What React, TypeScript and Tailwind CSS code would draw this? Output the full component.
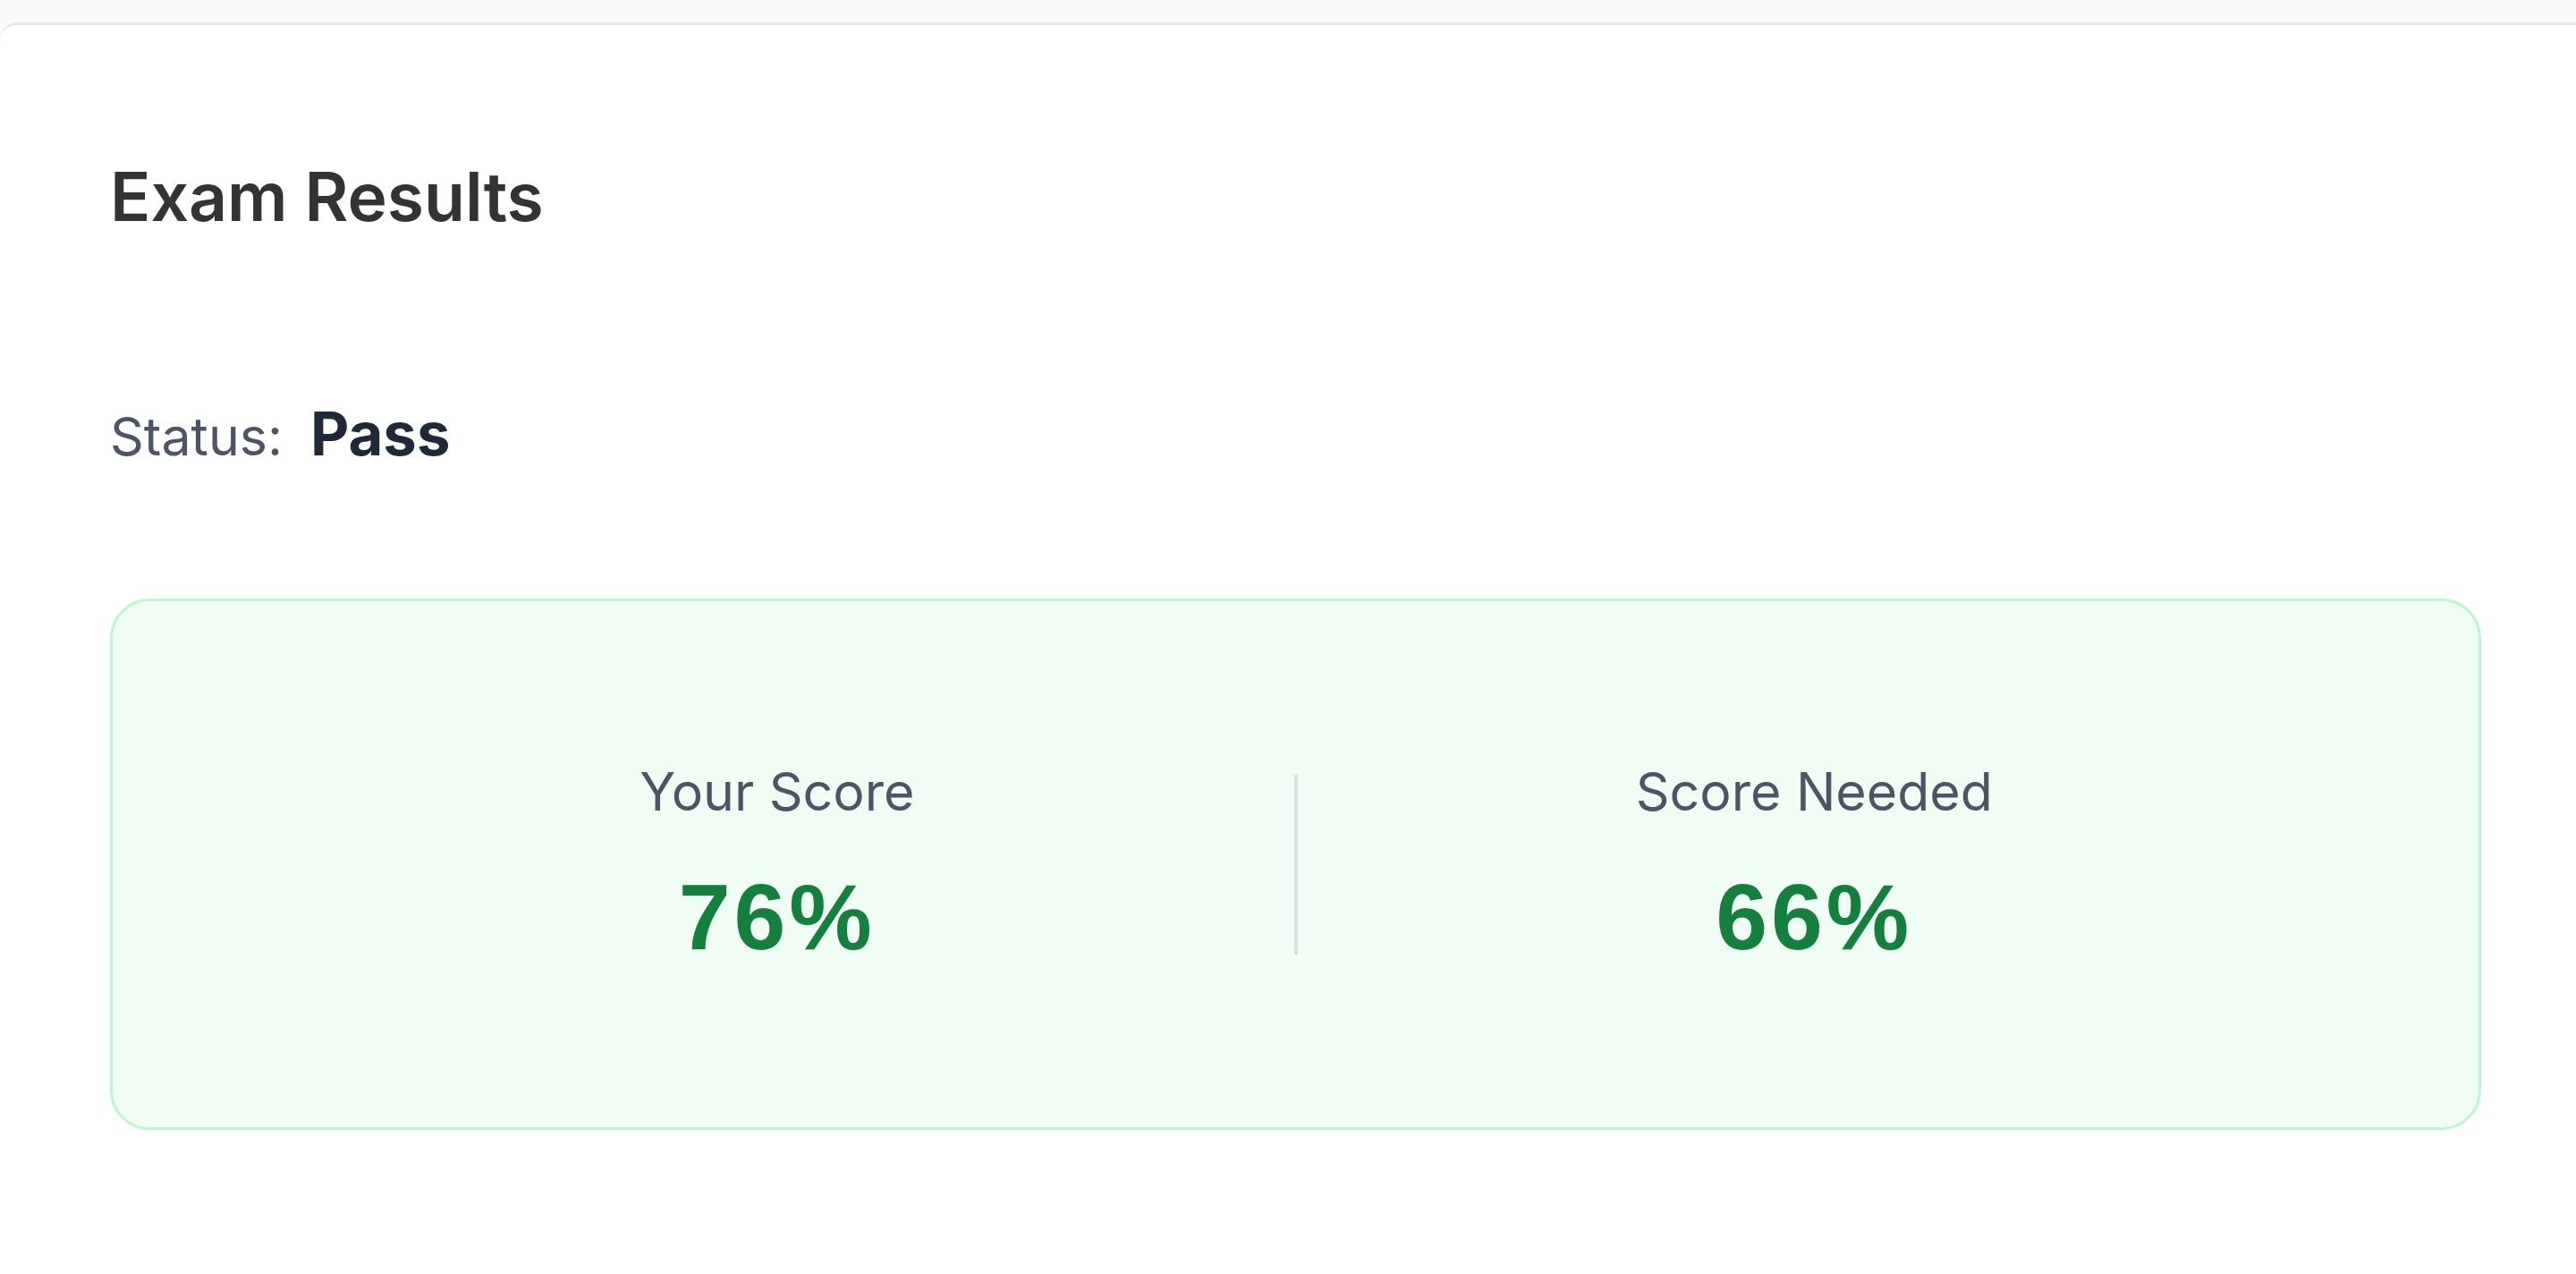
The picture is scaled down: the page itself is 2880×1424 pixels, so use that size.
const SCORES = [
  { label: 'Your Score', value: '76%' },
  { label: 'Score Needed', value: '66%' },
];

function ScoreColumn({ label, value }: { label: string; value: string }) {
  return (
    <div className="flex-1 flex flex-col items-center">
      <span className="text-[59px] leading-none text-[#4b5563] font-['Inter',sans-serif]">{label}</span>
      <span className="mt-[59px] text-[104px] leading-none font-bold tracking-[4px] text-[#15803d] font-['Liberation_Sans',Arial,sans-serif]">
        {value}
      </span>
    </div>
  );
}

export default function App() {
  return (
    <div className="min-h-screen bg-[#f9fafb] pt-[25px] overflow-hidden font-['Inter',sans-serif]">
      <div className="min-h-[1399px] bg-white border-t-[3px] border-[#e5e7eb] rounded-tl-[20px] pl-[123px] pr-[106px] pt-[154px]">
        <h1 className="text-[75px] leading-none font-semibold text-[#333333]">Exam Results</h1>

        {/* Status line */}
        <div className="mt-[194px] flex items-baseline gap-[31px]">
          <span className="text-[59px] leading-none text-[#4b5563]">Status:</span>
          <span className="text-[67px] leading-none font-bold text-[#1f2937]">Pass</span>
        </div>

        {/* Score summary */}
        <div className="mt-[151px] bg-[#f0fdf4] border-[3px] border-[#bbf7d0] rounded-[44px] px-[165px] py-[183px] flex items-center">
          <ScoreColumn label={SCORES[0].label} value={SCORES[0].value} />
          <div className="w-[4px] h-[201px] bg-[#dadee4]" />
          <ScoreColumn label={SCORES[1].label} value={SCORES[1].value} />
        </div>
      </div>
    </div>
  );
}
